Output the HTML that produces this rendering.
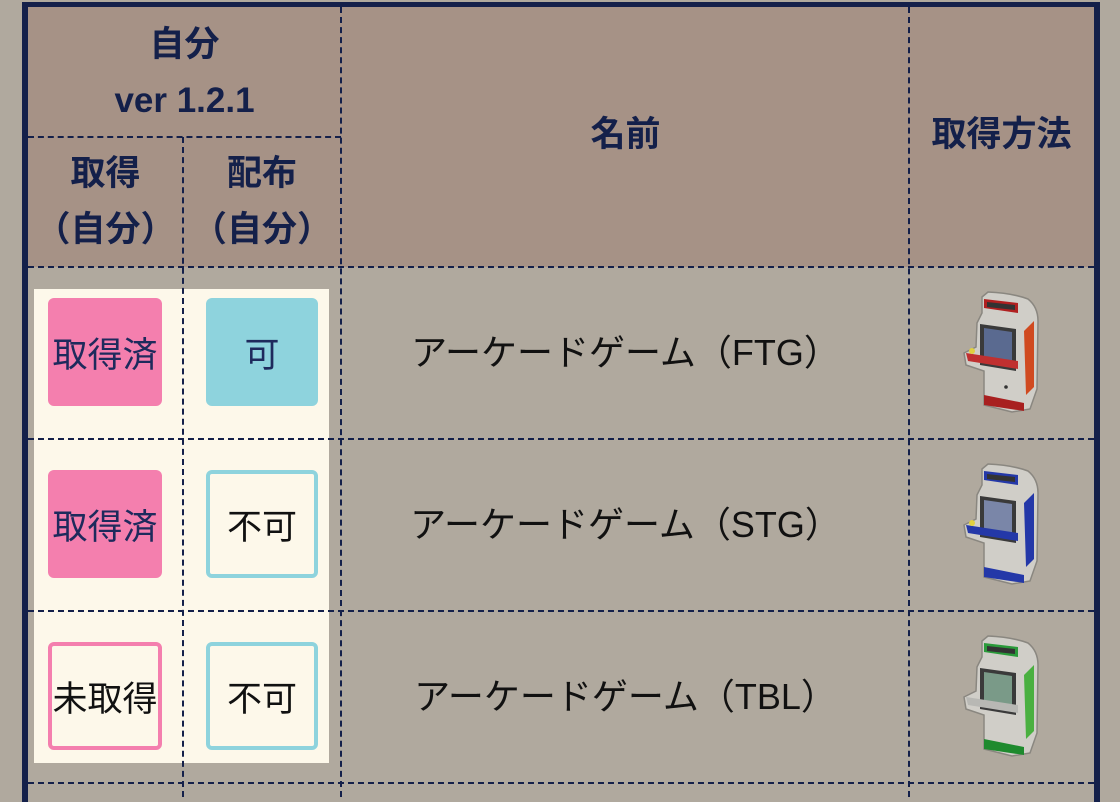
<!DOCTYPE html>
<html><head><meta charset="utf-8"><style>
*{margin:0;padding:0;box-sizing:border-box}
body{width:1120px;height:794px;background:#b0a99e;position:relative;overflow:hidden;font-family:"Liberation Sans","Noto Sans CJK JP",sans-serif}
.a{position:absolute}
.hd{background:#a69286}
.t{color:#14204a;font-weight:bold;font-size:35px;text-align:center;line-height:56px}
.vl{position:absolute;width:0;border-left:2px dashed #14204a}
.hl{position:absolute;height:0;border-top:2px dashed #14204a}
.b{position:absolute;width:114px;height:108px;border-radius:6px;display:flex;align-items:center;justify-content:center;font-size:35px;white-space:nowrap}
.pf{background:#f47fae;color:#1e2a5c}
.cf{background:#8ed3dd;color:#1e2a5c}
.po{border:4px solid #f47fae;color:#111}
.co{border:4px solid #8ed3dd;color:#111}
.nm{position:absolute;left:342px;width:567px;text-align:center;font-size:36px;color:#111;white-space:nowrap}
</style></head><body>
<div class="a hd" style="left:28px;top:7px;width:1066px;height:260px"></div>
<div class="a" style="left:22px;top:2px;width:1078px;height:5px;background:#14204a"></div>
<div class="a" style="left:22px;top:2px;width:6px;height:800px;background:#14204a"></div>
<div class="a" style="left:1094px;top:2px;width:6px;height:800px;background:#14204a"></div>
<div class="a" style="left:34px;top:289px;width:295px;height:474px;background:#fdf8ea"></div>

<div class="a t" style="left:28px;top:17px;width:313px">自分<br>ver 1.2.1</div>
<div class="a t" style="left:28px;top:146px;width:155px">取得<br>（自分）</div>
<div class="a t" style="left:183px;top:146px;width:158px">配布<br>（自分）</div>
<div class="a t" style="left:342px;top:107px;width:567px">名前</div>
<div class="a t" style="left:909px;top:107px;width:185px">取得方法</div>

<div class="hl" style="left:28px;top:136px;width:313px"></div>
<div class="hl" style="left:28px;top:266px;width:1066px"></div>
<div class="hl" style="left:28px;top:438px;width:1066px"></div>
<div class="hl" style="left:28px;top:610px;width:1066px"></div>
<div class="hl" style="left:28px;top:782px;width:1066px"></div>
<div class="vl" style="left:182px;top:137px;height:660px"></div>
<div class="vl" style="left:340px;top:7px;height:790px"></div>
<div class="vl" style="left:908px;top:7px;height:790px"></div>

<div class="b pf" style="left:48px;top:298px">取得済</div>
<div class="b cf" style="left:206px;top:298px;width:112px">可</div>
<div class="b pf" style="left:48px;top:470px">取得済</div>
<div class="b co" style="left:206px;top:470px;width:112px">不可</div>
<div class="b po" style="left:48px;top:642px">未取得</div>
<div class="b co" style="left:206px;top:642px;width:112px">不可</div>

<div class="nm" style="top:324px">アーケードゲーム（FTG）</div>
<div class="nm" style="top:496px">アーケードゲーム（STG）</div>
<div class="nm" style="top:668px">アーケードゲーム（TBL）</div>

<svg class="a" style="left:962px;top:291px" width="82" height="122" viewBox="0 0 82 122">
<path d="M20 6 L26 1 Q50 2 66 8 Q76 16 76 30 L75 98 L68 118 L50 121 L22 114 L22 80 L4 74 L2 62 L14 56 L15 32 L20 22 Z" fill="#d0cec8" stroke="#8a8780" stroke-width="1.5"/>
<path d="M22 8 L56 12 L56 22 L22 17 Z" fill="#b02020"/><path d="M25 11 L53 14 L53 19 L25 16 Z" fill="#333"/>
<path d="M18 33 L54 38 L54 80 L18 74 Z" fill="#3a3a3a"/>
<path d="M22 37 L50 41 L50 76 L22 71 Z" fill="#5a6a90"/>
<path d="M4 62 L56 70 L56 78 L6 70 Z" fill="#c03030"/>
<circle cx="10" cy="60" r="3" fill="#e0d040"/>
<path d="M62 40 L72 30 L72 96 L64 104 Z" fill="#d04a20"/>
<path d="M22 104 L62 112 L62 120 L22 114 Z" fill="#a82020"/>
<circle cx="44" cy="96" r="1.8" fill="#333"/>
</svg>
<svg class="a" style="left:962px;top:463px" width="82" height="122" viewBox="0 0 82 122">
<path d="M20 6 L26 1 Q50 2 66 8 Q76 16 76 30 L75 98 L68 118 L50 121 L22 114 L22 80 L4 74 L2 62 L14 56 L15 32 L20 22 Z" fill="#d0cec8" stroke="#8a8780" stroke-width="1.5"/>
<path d="M22 8 L56 12 L56 22 L22 17 Z" fill="#2438a8"/><path d="M25 11 L53 14 L53 19 L25 16 Z" fill="#333"/>
<path d="M18 33 L54 38 L54 80 L18 74 Z" fill="#3a3a3a"/>
<path d="M22 37 L50 41 L50 76 L22 71 Z" fill="#7a86a8"/>
<path d="M4 62 L56 70 L56 78 L6 70 Z" fill="#2438a8"/>
<circle cx="10" cy="60" r="3" fill="#e0d040"/>
<path d="M62 40 L72 30 L72 96 L64 104 Z" fill="#2438a8"/>
<path d="M22 104 L62 112 L62 120 L22 114 Z" fill="#2438a8"/>
</svg>
<svg class="a" style="left:962px;top:635px" width="82" height="122" viewBox="0 0 82 122">
<path d="M20 6 L26 1 Q50 2 66 8 Q76 16 76 30 L75 98 L68 118 L50 121 L22 114 L22 80 L4 74 L2 62 L14 56 L15 32 L20 22 Z" fill="#d0cec8" stroke="#8a8780" stroke-width="1.5"/>
<path d="M22 8 L56 12 L56 22 L22 17 Z" fill="#2a9a3a"/><path d="M25 11 L53 14 L53 19 L25 16 Z" fill="#333"/>
<path d="M18 33 L54 38 L54 80 L18 74 Z" fill="#3a3a3a"/>
<path d="M22 37 L50 41 L50 76 L22 71 Z" fill="#7a9a88"/>
<path d="M4 62 L56 70 L56 78 L6 70 Z" fill="#b8b8b4"/>
<path d="M62 40 L72 30 L72 96 L64 104 Z" fill="#4ab040"/>
<path d="M22 104 L62 112 L62 120 L22 114 Z" fill="#1e8a2e"/>
</svg>
</body></html>
